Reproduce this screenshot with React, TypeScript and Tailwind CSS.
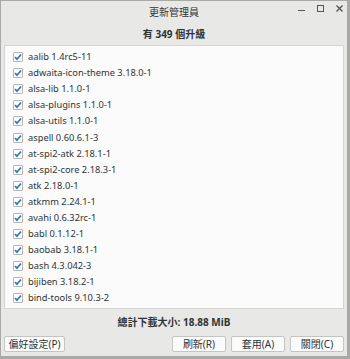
import React from "react";

const pkgs = [
  "aalib 1.4rc5-11",
  "adwaita-icon-theme 3.18.0-1",
  "alsa-lib 1.1.0-1",
  "alsa-plugins 1.1.0-1",
  "alsa-utils 1.1.0-1",
  "aspell 0.60.6.1-3",
  "at-spi2-atk 2.18.1-1",
  "at-spi2-core 2.18.3-1",
  "atk 2.18.0-1",
  "atkmm 2.24.1-1",
  "avahi 0.6.32rc-1",
  "babl 0.1.12-1",
  "baobab 3.18.1-1",
  "bash 4.3.042-3",
  "bijiben 3.18.2-1",
  "bind-tools 9.10.3-2",
];

function Check() {
  return (
    <span className="flex h-[10px] w-[10px] items-center justify-center rounded-[1px] border border-[#b6b6b3] bg-white">
      <svg width="8" height="8" viewBox="0 0 8 8">
        <path d="M1 4.2 L3 6.2 L7 1.5" fill="none" stroke="#2a76c6" strokeWidth="1.7" />
      </svg>
    </span>
  );
}

export default function App() {
  return (
    <div
      className="flex h-[359px] w-[350px] flex-col border-b-[3px] border-l border-r-[3px] border-t border-[#a9a9a7] bg-[#e8e8e7] text-[#2e3436]"
      style={{ fontFamily: '"Noto Sans", "Noto Sans CJK TC", sans-serif' }}
    >
      <div className="relative flex h-[22px] items-center justify-center text-[10px]">
        <span>更新管理員</span>
        <div className="absolute right-[4px] top-[4px] flex items-center gap-[12px] text-[#555]">
          <span className="mt-[4px] h-[1.5px] w-[7px] bg-[#555]" />
          <span className="h-[7px] w-[7px] border-[1.5px] border-[#555]" />
          <svg width="7" height="7" viewBox="0 0 7 7">
            <path d="M0.5 0.5 L6.5 6.5 M6.5 0.5 L0.5 6.5" stroke="#555" strokeWidth="1.4" />
          </svg>
        </div>
      </div>
      <div className="flex h-[22px] items-center justify-center text-[10px] font-bold">有 349 個升級</div>
      <div className="mx-[3px] flex flex-1 flex-col border border-[#d4d4d2] bg-[#fbfbfb] pt-[3px]">
        {pkgs.map((p) => (
          <div key={p} className="flex h-[16.1px] items-center gap-[5px] pl-[8px] text-[9.3px]">
            <Check />
            <span>{p}</span>
          </div>
        ))}
      </div>
      <div className="flex h-[27px] items-center justify-center text-[10px] font-bold">總計下載大小: 18.88 MiB</div>
      <div className="flex h-[20px] items-start px-[3px] text-[10px]">
        <button className="flex h-[16px] w-[61px] items-center justify-center rounded-[2px] border border-[#c4c4c2] bg-[#fbfbfb]">偏好設定(P)</button>
        <div className="flex-1" />
        <div className="flex gap-[5px]">
          <button className="flex h-[16px] w-[54px] items-center justify-center rounded-[2px] border border-[#c4c4c2] bg-[#fbfbfb]">刷新(R)</button>
          <button className="flex h-[16px] w-[54px] items-center justify-center rounded-[2px] border border-[#c4c4c2] bg-[#fbfbfb]">套用(A)</button>
          <button className="flex h-[16px] w-[54px] items-center justify-center rounded-[2px] border border-[#c4c4c2] bg-[#fbfbfb]">關閉(C)</button>
        </div>
      </div>
    </div>
  );
}
